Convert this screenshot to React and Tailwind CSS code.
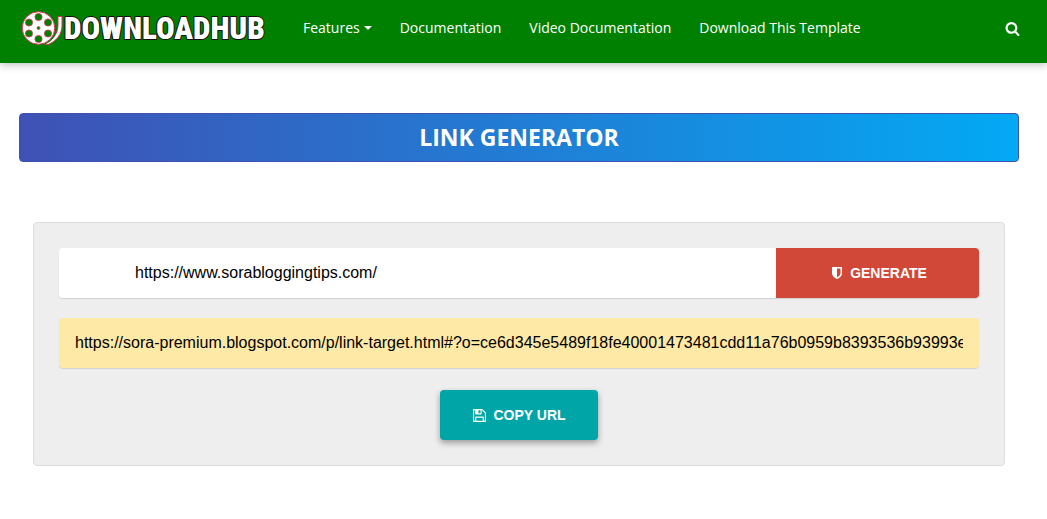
import { useState } from "react";

const navLinks = [
  { label: "Features", dropdown: true },
  { label: "Documentation" },
  { label: "Video Documentation" },
  { label: "Download This Template" },
];

function Icon({ d, className }) {
  return (
    <svg viewBox="0 0 1792 1792" fill="currentColor" aria-hidden="true" className={className}>
      <path d={d} />
    </svg>
  );
}

const searchPath =
  "M1216 832q0-185-131.5-316.5t-316.5-131.5-316.5 131.5-131.5 316.5 131.5 316.5 316.5 131.5 316.5-131.5 131.5-316.5zm512 832q0 52-38 90t-90 38q-54 0-90-38l-343-342q-179 124-399 124-143 0-273.5-55.5t-225-150-150-225-55.5-273.5 55.5-273.5 150-225 225-150 273.5-55.5 273.5 55.5 225 150 150 225 55.5 273.5q0 220-124 399l343 343q37 37 37 90z";
const shieldPath =
  "M1344 960v-640h-448v1137q119-63 213-137 235-184 235-360zm192-768v768q0 86-33.5 170.5t-83 150-118 127.5-126.5 103-121 77.5-89.5 49.5-42.5 20q-12 6-26 6t-26-6q-16-7-42.5-20t-89.5-49.5-121-77.5-126.5-103-118-127.5-83-150-33.5-170.5v-768q0-26 19-45t45-19h1152q26 0 45 19t19 45z";
const savePath =
  "M512 1536h768v-384h-768v384zm896 0h128v-896q0-14-10-38.5t-20-34.5l-281-281q-10-10-34-20t-39-10v416q0 40-28 68t-68 28h-576q-40 0-68-28t-28-68v-416h-128v1280h128v-416q0-40 28-68t68-28h832q40 0 68 28t28 68v416zm-384-928v-320q0-13-9.5-22.5t-22.5-9.5h-192q-13 0-22.5 9.5t-9.5 22.5v320q0 13 9.5 22.5t22.5 9.5h192q13 0 22.5-9.5t9.5-22.5zm640 32v928q0 40-28 68t-68 28h-1344q-40 0-68-28t-28-68v-1344q0-40 28-68t68-28h928q40 0 88 20t76 48l280 280q28 28 48 76t20 88z";

function Logo() {
  return (
    <a href="#" aria-label="DownloadHub" className="flex w-[245px] shrink-0 items-center">
      <svg viewBox="0 0 42 36" aria-hidden="true" className="h-9 w-[42px] shrink-0">
        <path
          d="M37 6.5h4v9c0 9-6 16-14 19h-5c9-4 15-10 15-19z"
          fill="#fff"
          stroke="#d8375f"
        />
        <circle cx="18" cy="18" r="17.5" fill="green" />
        <circle cx="17.5" cy="18" r="16.3" fill="#fff" stroke="#d8375f" />
        <g fill="green" stroke="#d8375f" strokeWidth="0.8">
          <circle cx="17.5" cy="7" r="3.6" />
          <circle cx="17.5" cy="29" r="3.6" />
          <circle cx="8" cy="12.5" r="3.6" />
          <circle cx="27" cy="12.5" r="3.6" />
          <circle cx="8" cy="23.5" r="3.6" />
          <circle cx="27" cy="23.5" r="3.6" />
          <circle cx="17.5" cy="18" r="1.5" />
        </g>
      </svg>
      <svg viewBox="0 0 203 36" className="h-9 w-[203px] shrink-0">
        <text
          x="1"
          y="29"
          fill="#fff"
          stroke="#111"
          strokeWidth="2"
          paintOrder="stroke"
          strokeLinejoin="round"
          className="font-['Roboto_Condensed','Open_Sans_Condensed','Liberation_Sans_Narrow',sans-serif] text-[31px] font-black"
        >
          DOWNLOADHUB
        </text>
      </svg>
    </a>
  );
}

function Header() {
  return (
    <header className="flex h-[63px] items-start bg-[#008000] pr-[27px] pl-[21px] text-white shadow-[0_2px_8px_rgba(0,0,0,0.25)]">
      <div className="flex h-14 items-center">
        <Logo />
      </div>
      <nav className="ml-[37px] flex h-14 items-center gap-7 font-['Open_Sans',sans-serif] text-sm whitespace-nowrap">
        {navLinks.map((link) => (
          <a key={link.label} href="#" className="flex items-center gap-1">
            {link.label}
            {link.dropdown && (
              <span className="border-x-4 border-t-4 border-x-transparent border-t-white" />
            )}
          </a>
        ))}
      </nav>
      <button type="button" aria-label="Search" className="ml-auto flex h-14 items-center">
        <Icon d={searchPath} className="h-[15px] w-[15px]" />
      </button>
    </header>
  );
}

export default function App() {
  const [url, setUrl] = useState("https://www.sorabloggingtips.com/");
  const [output] = useState(
    "https://sora-premium.blogspot.com/p/link-target.html#?o=ce6d345e5489f18fe40001473481cdd11a76b0959b8393536b93993e"
  );

  function handleSubmit(e) {
    e.preventDefault();
  }

  return (
    <div className="min-h-screen bg-white font-['Liberation_Sans',Arial,sans-serif] text-black">
      <Header />
      <main className="pt-[50px] pr-7 pb-12 pl-[19px]">
        <h1 className="rounded border border-[#3f51b5] bg-linear-to-r/srgb from-[#3f51b5] to-[#03a9f4] text-center font-['Open_Sans',sans-serif] text-[23px] leading-[47px] font-bold text-white">
          LINK GENERATOR
        </h1>

        <form
          onSubmit={handleSubmit}
          className="mx-[14px] mt-[60px] rounded border border-[#dddddd] bg-[#eeeeee] p-[25px]"
        >
          <div className="flex h-[50px] rounded shadow-[0_1px_1px_rgba(0,0,0,0.12)]">
            <input
              type="text"
              aria-label="Link"
              value={url}
              onChange={(e) => setUrl(e.target.value)}
              className="min-w-0 flex-1 rounded-l bg-white pr-4 pl-[76px] text-base outline-none"
            />
            <button
              type="submit"
              className="flex w-[203px] items-center justify-center gap-1.5 rounded-r bg-[#d14738] pl-0.5 text-sm font-bold text-white"
            >
              <Icon d={shieldPath} className="h-[14px] w-[14px]" />
              GENERATE
            </button>
          </div>
          <input
            type="text"
            aria-label="Generated link"
            readOnly
            value={output}
            className="mt-5 block h-[50px] w-full rounded bg-[#ffe9a6] px-4 text-base shadow-[0_1px_1px_rgba(0,0,0,0.12)] outline-none"
          />
          <button
            type="button"
            className="mx-auto mt-[22px] flex h-[50px] w-[158px] items-center justify-center gap-1.5 rounded bg-[#00a5a8] text-sm font-bold text-white shadow-[0_3px_6px_rgba(0,0,0,0.35)]"
          >
            <Icon d={savePath} className="h-[15px] w-[15px]" />
            COPY URL
          </button>
        </form>
      </main>
    </div>
  );
}
